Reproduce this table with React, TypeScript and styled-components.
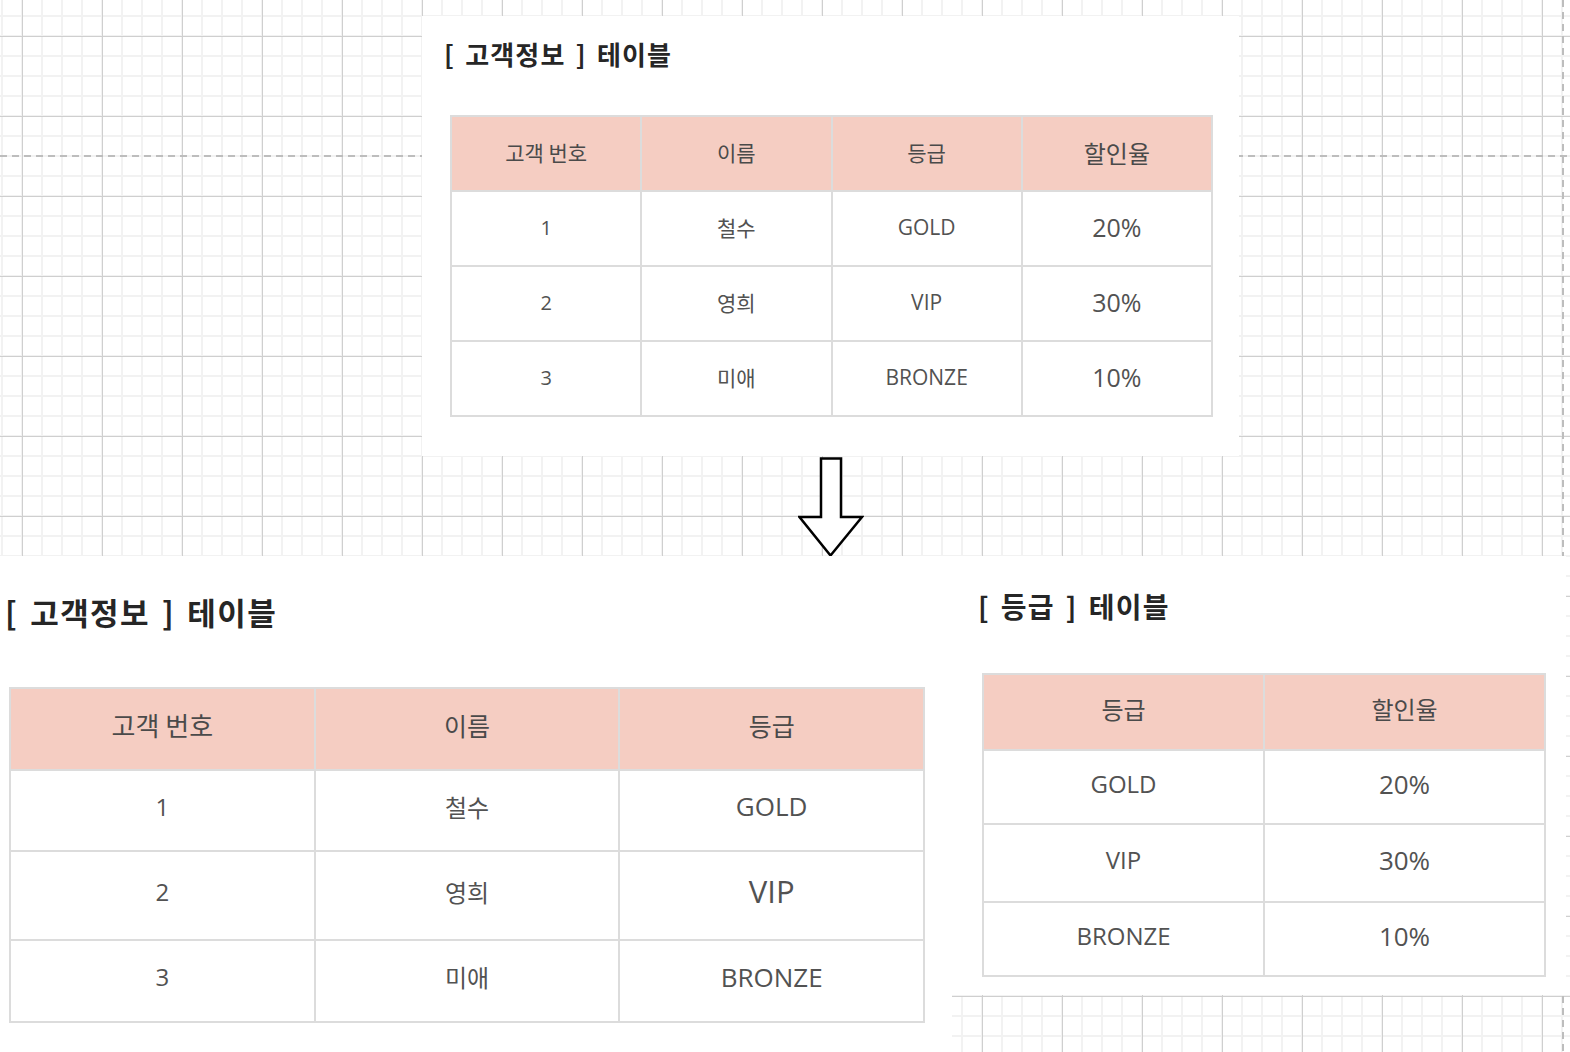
import styled, { createGlobalStyle } from "styled-components";

const GlobalStyle = createGlobalStyle`
    html, body {
        margin: 0;
        padding: 0;
    }
    body {
        font-family: "Open Sans", "Noto Sans CJK KR", sans-serif;
        background-color: #ffffff;
        background-image:
            repeating-linear-gradient(to right, #bdbdbd 0 7px, transparent 7px 12px),
            repeating-linear-gradient(to bottom, #bdbdbd 0 7px, transparent 7px 12px),
            linear-gradient(to right, #cfcfcf 1px, transparent 1px),
            linear-gradient(to bottom, #cfcfcf 1px, transparent 1px),
            linear-gradient(to right, #f2f2f2 2px, transparent 2px),
            linear-gradient(to bottom, #f2f2f2 2px, transparent 2px);
        background-size: 100% 2px, 2px 100%, 80px 80px, 80px 80px, 20px 20px, 20px 20px;
        background-position: 0 155px, 1562px 0, 22px 0, 0 36px, 1px 0, 0 15px;
        background-repeat: no-repeat, no-repeat, repeat, repeat, repeat, repeat;
        min-height: 1052px;
    }
`;

const Page = styled.div`
    width: 1570px;
    display: flex;
    flex-direction: column;
`;

const TopArea = styled.div`
    height: 556px;
    box-sizing: border-box;
    padding: 16px 0 0 422px;
`;

const TopColumn = styled.div`
    width: 817px;
    display: flex;
    flex-direction: column;
    align-items: center;
`;

const Panel = styled.div`
    width: 100%;
    height: 440px;
    box-sizing: border-box;
    background: #ffffff;
    padding: 21px 0 0 22px;
`;

const Title = styled.h2<{ size: number }>`
    margin: 0;
    font-family: "Noto Sans CJK KR", sans-serif;
    font-size: ${(p) => p.size}px;
    font-weight: 700;
    line-height: 1.3;
    letter-spacing: 0.045em;
    word-spacing: 0.12em;
    color: #262626;
    white-space: pre;
`;

const Arrow = styled.svg`
    display: block;
    margin-top: 1px;
`;

const BottomArea = styled.div`
    display: flex;
    align-items: flex-start;
`;

const LeftBlock = styled.div`
    width: 952px;
    height: 496px;
    box-sizing: border-box;
    background: #ffffff;
    padding: 36px 0 0 5px;
`;

const RightBlock = styled.div`
    width: 614px;
    height: 439px;
    box-sizing: border-box;
    background: #ffffff;
    padding: 32px 0 0 26px;
`;

const Table = styled.table<{ width: number; top: number; left: number; lift: number }>`
    border-collapse: collapse;
    table-layout: fixed;
    width: ${(p) => p.width}px;
    margin: ${(p) => p.top}px 0 0 ${(p) => p.left}px;
    border: 2px solid #dcdcdc;

    th,
    td {
        padding: 0 0 ${(p) => p.lift}px;
    }
`;

const Row = styled.tr<{ h: number }>`
    height: ${(p) => p.h}px;
`;

const HeadCell = styled.th<{ size: number }>`
    background: #f5cdc2;
    border: 2px solid #dcdcdc;
    font-family: "Noto Sans CJK KR", sans-serif;
    font-weight: 400;
    font-size: ${(p) => p.size}px;
    color: #4a4a4a;
    text-align: center;
    vertical-align: middle;
`;

const Cell = styled.td<{ size: number }>`
    background: #ffffff;
    border: 2px solid #dcdcdc;
    font-family: "Open Sans", "Noto Sans CJK KR", sans-serif;
    font-size: ${(p) => p.size}px;
    color: #525252;
    text-align: center;
    vertical-align: middle;
`;

const customers = [
    { id: "1", name: "철수", grade: "GOLD", rate: "20%" },
    { id: "2", name: "영희", grade: "VIP", rate: "30%" },
    { id: "3", name: "미애", grade: "BRONZE", rate: "10%" },
];

const grades = [
    { grade: "GOLD", rate: "20%" },
    { grade: "VIP", rate: "30%" },
    { grade: "BRONZE", rate: "10%" },
];

const App = () => {
    const bottomRows = [81, 89, 82];
    const gradeRows = [74, 78, 74];

    return (
        <>
            <GlobalStyle />
            <Page>
                <TopArea>
                    <TopColumn>
                        <Panel>
                            <Title size={26}>{"[ 고객정보 ] 테이블"}</Title>
                            <Table width={763} top={44} left={6} lift={2}>
                                <tbody>
                                    <Row h={75}>
                                        <HeadCell size={21}>고객 번호</HeadCell>
                                        <HeadCell size={21}>이름</HeadCell>
                                        <HeadCell size={21}>등급</HeadCell>
                                        <HeadCell size={24}>할인율</HeadCell>
                                    </Row>
                                    {customers.map((item) => (
                                        <Row h={75} key={item.id}>
                                            <Cell size={20}>{item.id}</Cell>
                                            <Cell size={21}>{item.name}</Cell>
                                            <Cell size={21}>{item.grade}</Cell>
                                            <Cell size={25}>{item.rate}</Cell>
                                        </Row>
                                    ))}
                                </tbody>
                            </Table>
                        </Panel>
                        <Arrow width="66" height="100" viewBox="0 0 66 100">
                            <path
                                d="M23 1.5 H43 V60 H64 L32.5 98.5 L1.5 60 H23 Z"
                                fill="#ffffff"
                                stroke="#000000"
                                strokeWidth="2.5"
                                strokeLinejoin="miter"
                            />
                        </Arrow>
                    </TopColumn>
                </TopArea>
                <BottomArea>
                    <LeftBlock>
                        <Title size={31}>{"[ 고객정보 ] 테이블"}</Title>
                        <Table width={916} top={55} left={4} lift={9}>
                            <tbody>
                                <Row h={82}>
                                    <HeadCell size={26}>고객 번호</HeadCell>
                                    <HeadCell size={25}>이름</HeadCell>
                                    <HeadCell size={25}>등급</HeadCell>
                                </Row>
                                {customers.map((item, i) => (
                                    <Row h={bottomRows[i]} key={item.id}>
                                        <Cell size={24}>{item.id}</Cell>
                                        <Cell size={24}>{item.name}</Cell>
                                        <Cell size={i === 1 ? 31 : 26}>{item.grade}</Cell>
                                    </Row>
                                ))}
                            </tbody>
                        </Table>
                    </LeftBlock>
                    <RightBlock>
                        <Title size={28}>{"[ 등급 ] 테이블"}</Title>
                        <Table width={564} top={49} left={4} lift={7}>
                            <tbody>
                                <Row h={76}>
                                    <HeadCell size={24}>등급</HeadCell>
                                    <HeadCell size={24}>할인율</HeadCell>
                                </Row>
                                {grades.map((item, i) => (
                                    <Row h={gradeRows[i]} key={item.grade}>
                                        <Cell size={24}>{item.grade}</Cell>
                                        <Cell size={26}>{item.rate}</Cell>
                                    </Row>
                                ))}
                            </tbody>
                        </Table>
                    </RightBlock>
                </BottomArea>
            </Page>
        </>
    );
};

export default App;
